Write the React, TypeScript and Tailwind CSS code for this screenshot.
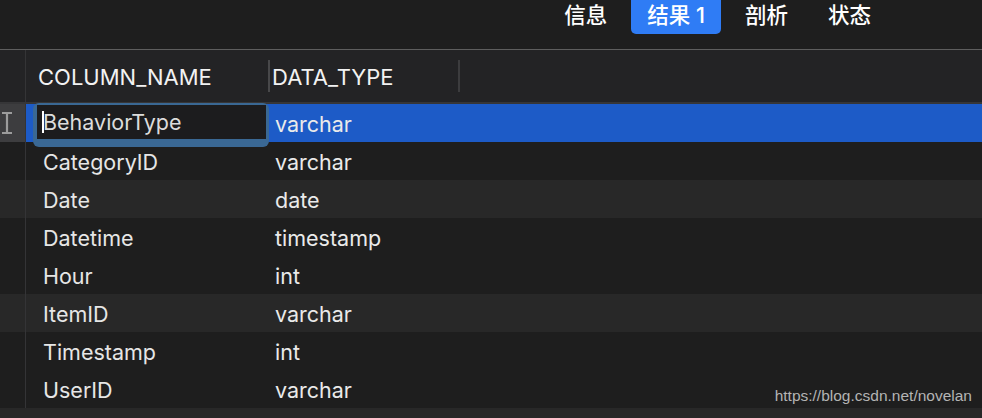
const tabs = ["信息", "结果 1", "剖析", "状态"];

const rows = [
  ["BehaviorType", "varchar"],
  ["CategoryID", "varchar"],
  ["Date", "date"],
  ["Datetime", "timestamp"],
  ["Hour", "int"],
  ["ItemID", "varchar"],
  ["Timestamp", "int"],
  ["UserID", "varchar"],
];

const lighter = [2, 5];

const App = () => {
  return (
    <div className="relative w-[982px] h-[418px] overflow-hidden bg-[#1e1e1e] font-['Inter','Liberation_Sans',sans-serif] text-[#e6e6e6]">
      {/* Tab bar */}
      <div className="flex h-[49px] justify-end gap-2 pr-[95px] bg-[#1e1e1e]">
        {tabs.map((t, i) => (
          <div
            key={t}
            className={`h-[34px] px-4 pb-[3px] flex items-center rounded-b-[5px] text-[21.5px] font-medium text-white font-['Inter','Noto_Sans_CJK_SC',sans-serif] ${
              i === 1 ? "bg-[#2f7cf5]" : ""
            }`}
          >
            {t}
          </div>
        ))}
      </div>
      <div className="h-px bg-[#5e5e5e]" />

      {/* Header */}
      <div className="flex h-[54px] bg-[#232325] border-b-2 border-[#363638]">
        <div className="w-[26px] border-r border-[#343436]" />
        <div className="w-[242px] flex items-center pl-3 pt-[2px] text-[22px] text-[#f2f2f2]">COLUMN_NAME</div>
        <div className="w-[2px] h-[32px] self-center bg-[#48484a]" />
        <div className="w-[188px] flex items-center pl-[2px] pt-[2px] text-[22px] text-[#f2f2f2]">DATA_TYPE</div>
        <div className="w-[2px] h-[32px] self-center bg-[#3c3c3e]" />
      </div>

      {/* Rows */}
      {rows.map(([name, type], i) => {
        const selected = i === 0;
        const bg = selected ? "bg-[#1d5bc7]" : lighter.includes(i) ? "bg-[#282828]" : "bg-[#1e1e1e]";
        return (
          <div key={name} className={`flex h-[38px] ${selected ? "" : bg}`}>
            <div
              className={`w-[26px] border-r border-[#343436] flex items-center ${
                selected ? "bg-[#3d3d3f]" : ""
              }`}
            >
              {selected && (
                <svg width="12" height="24" viewBox="0 0 12 24" className="ml-[1px]">
                  <path d="M1 2h10M1 22h10M6 2v20" stroke="#9c9c9c" strokeWidth="2.2" fill="none" />
                </svg>
              )}
            </div>
            <div className={`relative flex-1 flex ${selected ? bg : ""}`}>
              <div className="relative w-[242px] flex items-center pl-[17px] pt-[2px] text-[21.5px]">
                {selected ? (
                  <div className="absolute left-[7px] top-[-1px] w-[236px] h-[44px] rounded-[6px] bg-[#3a6894] z-10">
                    <div className="absolute left-[4px] top-[2px] right-[3px] h-[34px] bg-[#1c1c1e] flex items-center pl-[5px] text-[#dcdcdc]">
                      <span className="w-[2px] h-[22px] bg-white mr-[-1px]" />
                      {name}
                    </div>
                  </div>
                ) : (
                  name
                )}
              </div>
              <div className="flex items-center pl-[7px] pt-[2px] text-[21.5px] text-[#eaeaea]">{type}</div>
            </div>
          </div>
        );
      })}
      <div className="h-[10px] bg-[#282828]" />

      {/* Watermark */}
      <div className="absolute right-[10px] bottom-[11px] text-[15.5px] text-[#b4b4b4] font-['Liberation_Sans',sans-serif]">
        https://blog.csdn.net/novelan
      </div>
    </div>
  );
};

export default App;
